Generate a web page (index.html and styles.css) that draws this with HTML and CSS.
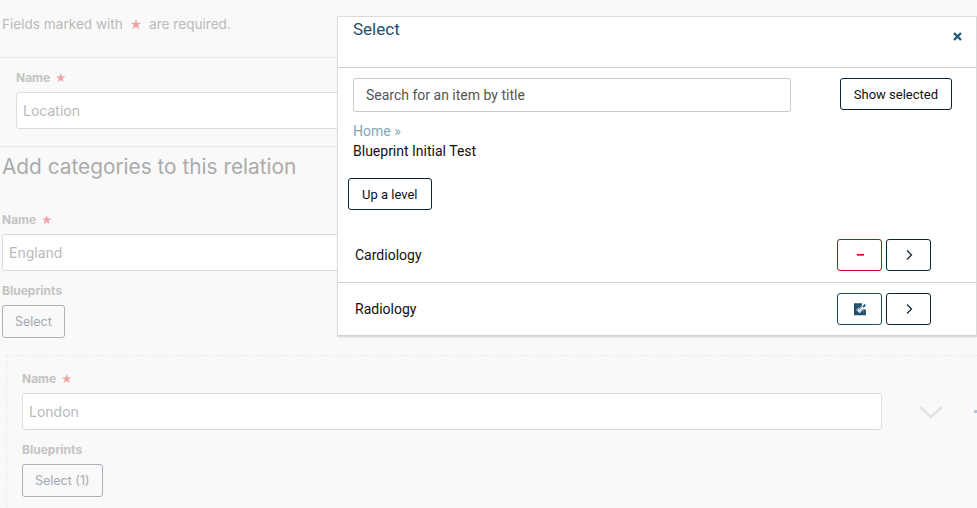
FILE: index.html
```html
<html lang="en">
  <head>
    <meta charset="UTF-8" />
    <meta name="viewport" content="width=device-width, initial-scale=1.0" />
    <link rel="stylesheet" href="styles.css">
    <title>Relation - Select</title>
  </head>
  <body>
    <main class="page">
      <p class="required">Fields marked with <span class="star">★</span> are required.</p>

      <section class="section">
        <label class="label">Name <span class="star">★</span></label>
        <input class="field" type="text" placeholder="Location" />
      </section>

      <h2>Add categories to this relation</h2>

      <div class="category">
        <label class="label">Name <span class="star">★</span></label>
        <input class="field" type="text" placeholder="England" />
        <label class="label">Blueprints</label>
        <button class="select-btn">Select</button>
      </div>

      <div class="child">
        <div class="child-main">
          <label class="label">Name <span class="star">★</span></label>
          <div class="child-row">
            <input class="field" type="text" placeholder="London" />
            <svg class="chevron" width="26" height="16" viewBox="0 0 26 16">
              <path d="M2 3 L13 13 L24 3" fill="none" stroke="#e2e2e2" stroke-width="2.5" />
            </svg>
            <span class="dot"></span>
          </div>
          <label class="label">Blueprints</label>
          <button class="select-btn">Select (1)</button>
        </div>
      </div>
    </main>

    <!-- modal sits on top of the form -->
    <div class="modal">
      <div class="modal-header">
        <h3>Select</h3>
        <svg class="close" width="9" height="9" viewBox="0 0 9 9">
          <path d="M1 1 L8 8 M8 1 L1 8" stroke="#1d5a7a" stroke-width="2.4" />
        </svg>
      </div>
      <div class="modal-body">
        <div class="search-row">
          <input class="search" type="text" placeholder="Search for an item by title" />
          <button class="btn">Show selected</button>
        </div>
        <div class="crumbs">
          <a class="home">Home »</a>
          <div>Blueprint Initial Test</div>
        </div>
        <button class="btn up">Up a level</button>
      </div>
      <ul class="items">
        <li class="item">
          <span>Cardiology</span>
          <div class="actions">
            <button class="btn icon remove">
              <svg width="10" height="4" viewBox="0 0 10 4"><rect x="2" y="1" width="7" height="1.6" fill="#d0021b" /></svg>
            </button>
            <button class="btn icon">
              <svg width="8" height="12" viewBox="0 0 8 12"><path d="M2 1.5 L6.5 6 L2 10.5" fill="none" stroke="#1b2a36" stroke-width="1.3" /></svg>
            </button>
          </div>
        </li>
        <li class="item">
          <span>Radiology</span>
          <div class="actions">
            <button class="btn icon checked">
              <svg width="14" height="14" viewBox="0 0 14 14">
                <path d="M9 2.5 H2.2 V12 H11.7 V7.5" fill="none" stroke="#1d4e6b" stroke-width="2.4" />
                <rect x="3" y="3.5" width="7.5" height="7.5" fill="#1d4e6b" />
                <path d="M4.3 6.6 L6.6 8.9 L12.3 2.6" fill="none" stroke="#fff" stroke-width="3.4" />
                <path d="M4.6 6.9 L6.6 8.9 L12.3 2.6" fill="none" stroke="#1d4e6b" stroke-width="1.9" />
                <path d="M5.2 7.5 L6.6 8.9 L10.3 4.8" fill="none" stroke="#fff" stroke-width="1.4" />
              </svg>
            </button>
            <button class="btn icon">
              <svg width="8" height="12" viewBox="0 0 8 12"><path d="M2 1.5 L6.5 6 L2 10.5" fill="none" stroke="#1b2a36" stroke-width="1.3" /></svg>
            </button>
          </div>
        </li>
      </ul>
    </div>
  </body>
</html>
```

FILE: styles.css
```css
*,
*::after,
*::before {
  margin: 0;
  padding: 0;
  box-sizing: border-box;
}

body {
  background-color: #f9f9f9;
  font-family: Inter, "Noto Sans", sans-serif;
  overflow: hidden;
  position: relative;
  width: 977px;
  height: 508px;
}

.page {
  padding-left: 2px;
}

.required {
  padding-top: 15px;
  font-size: 13.6px;
  line-height: 18px;
  color: #b9b9b9;
}
.star {
  color: #f0a3a3;
  font-size: 12px;
  margin: 0 3px;
}
.label .star {
  font-size: 11px;
  margin-left: 2px;
}

.section {
  margin-top: 23px;
  margin-left: -2px;
  padding: 12px 0 17px 16px;
  border-top: 1px solid #e6e6e6;
  border-bottom: 1px solid #e6e6e6;
}

.label {
  display: block;
  font-size: 12px;
  font-weight: 700;
  line-height: 16px;
  color: #c3c3c3;
  margin-bottom: 6px;
}

.field {
  display: block;
  width: 100%;
  height: 37px;
  padding: 0 6px;
  border: 1px solid #dcdcdc;
  border-radius: 3px;
  background: #fff;
  font-family: inherit;
  font-size: 14px;
}
.field::placeholder {
  color: #b9b9b9;
}

h2 {
  margin-top: 7px;
  font-size: 20.8px;
  font-weight: 400;
  line-height: 26px;
  color: #ababab;
}

.category {
  margin-top: 32px;
}
.category .field {
  margin-bottom: 12px;
}

.select-btn {
  height: 33px;
  padding: 0 12px;
  border: 1px solid #a9b2bb;
  border-radius: 3px;
  background: transparent;
  font-family: inherit;
  font-size: 12.5px;
  color: #a3aab2;
}

.child {
  margin: 17px 0 0 4px;
  border: 1px dashed #ebebeb;
  border-right: none;
  padding: 15px 0 12px 15px;
}
.child-main .field {
  width: 862px;
}
.child-row {
  display: flex;
  align-items: center;
  margin-bottom: 12px;
}
.chevron {
  margin-left: 36px;
}
.dot {
  margin-left: 30px;
  width: 3px;
  height: 3px;
  background: #b3c6d8;
}

/* Modal */
.modal {
  position: absolute;
  left: 337px;
  top: 16px;
  width: 640px;
  background: #fff;
  border: 1px solid #dcdcdc;
  box-shadow: 0 1px 2px rgba(0, 0, 0, 0.06);
  font-family: Roboto, "Liberation Sans", sans-serif;
  color: #111;
}
.modal-header {
  display: flex;
  justify-content: space-between;
  height: 51px;
  padding: 1px 14px 0 15px;
  border-bottom: 1px solid #cfcfcf;
}
.modal-header h3 {
  font-size: 17px;
  font-weight: 400;
  line-height: 22px;
  color: #1d4e6b;
}
.close {
  margin-top: 14px;
}

.modal-body {
  padding: 10px 0 0 15px;
}
.search-row {
  display: flex;
  justify-content: space-between;
  align-items: flex-start;
  padding-right: 24px;
}
.search {
  width: 438px;
  height: 34px;
  padding: 0 12px;
  border: 1px solid #c9c9c9;
  border-radius: 3px;
  font-family: inherit;
  font-size: 14px;
}
.search::placeholder {
  color: #555;
}

.btn {
  height: 32px;
  padding: 0 13px;
  background: #fff;
  border: 1px solid #0f2230;
  border-radius: 3px;
  font-family: inherit;
  font-size: 13px;
  color: #111;
}

.crumbs {
  margin-top: 9px;
  font-size: 14px;
  line-height: 20px;
}
.home {
  color: #7fa7bb;
}
.up {
  margin: 17px 0 0 -5px;
}

.items {
  list-style: none;
  margin-top: 18px;
}
.item {
  display: flex;
  justify-content: space-between;
  align-items: center;
  height: 55px;
  padding: 0 45px 0 17px;
  border-bottom: 1px solid #d2d2d2;
  font-size: 14px;
}
.item + .item {
  height: 53px;
}
.actions {
  display: flex;
  gap: 4px;
}
.btn.icon {
  width: 45px;
  height: 32px;
  padding: 0;
  display: flex;
  justify-content: center;
  align-items: center;
}
.btn.remove {
  border-color: #d0021b;
}
.btn.checked {
  border-color: #1d4e6b;
}
```
